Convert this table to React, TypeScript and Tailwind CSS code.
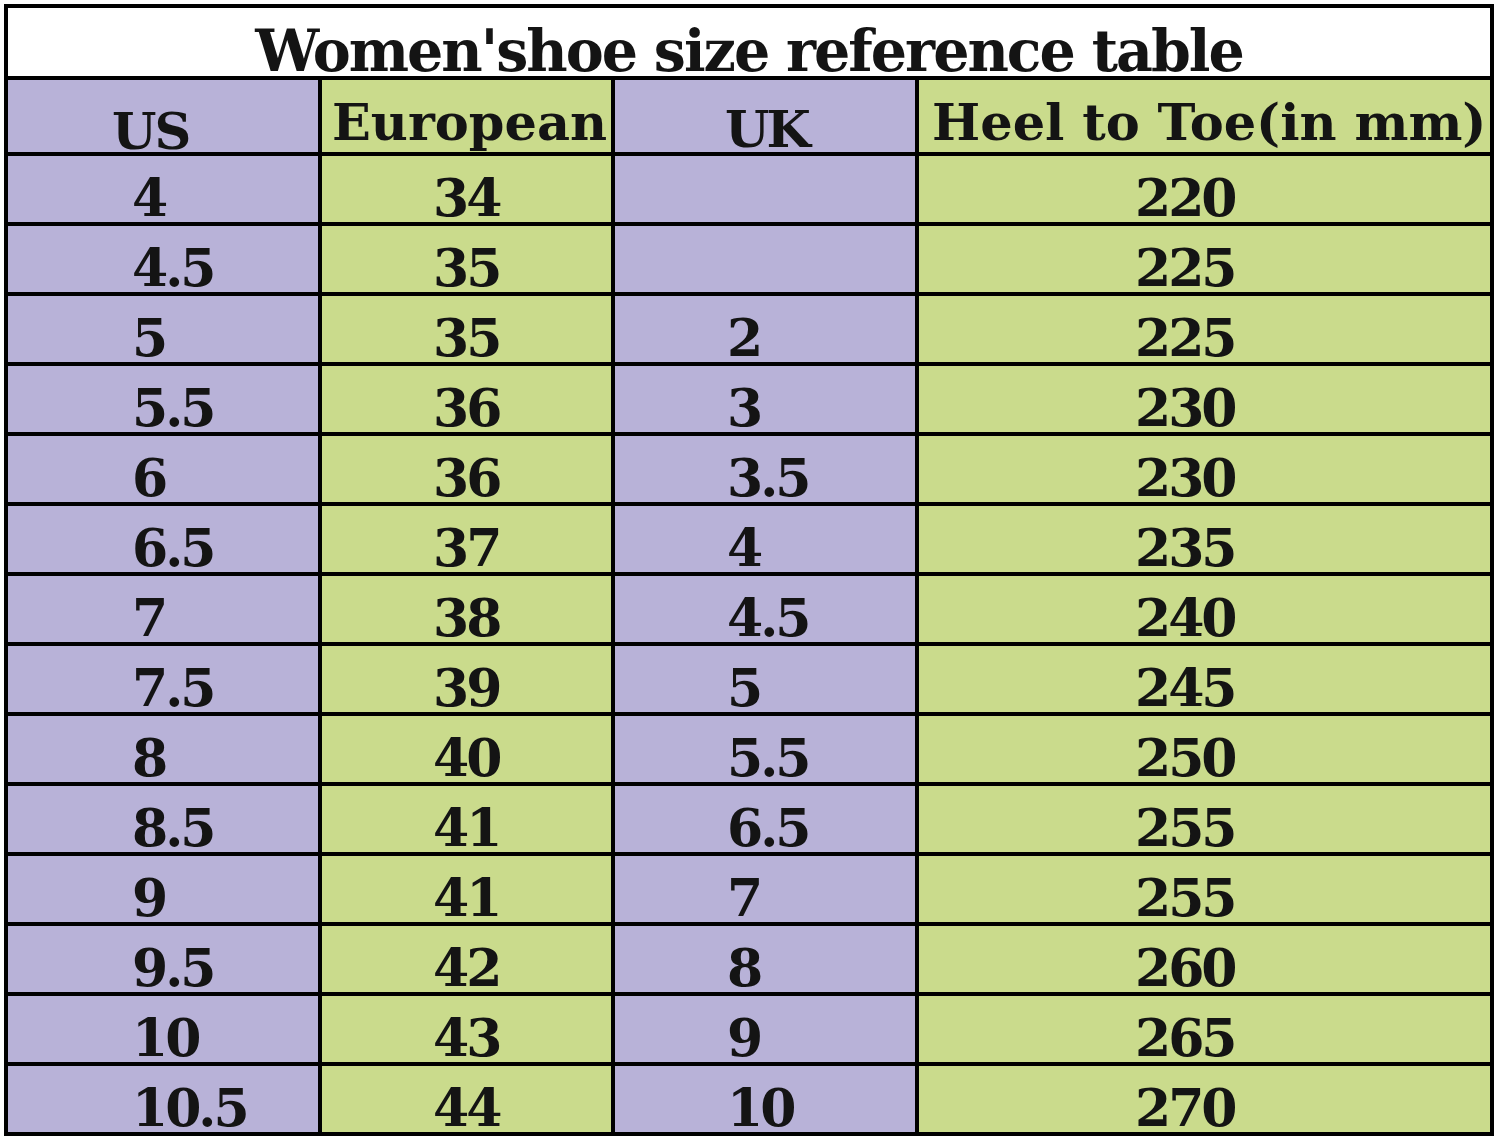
import React from 'react';

const rows: [string, string, string, string][] = [
  ['4', '34', '', '220'],
  ['4.5', '35', '', '225'],
  ['5', '35', '2', '225'],
  ['5.5', '36', '3', '230'],
  ['6', '36', '3.5', '230'],
  ['6.5', '37', '4', '235'],
  ['7', '38', '4.5', '240'],
  ['7.5', '39', '5', '245'],
  ['8', '40', '5.5', '250'],
  ['8.5', '41', '6.5', '255'],
  ['9', '41', '7', '255'],
  ['9.5', '42', '8', '260'],
  ['10', '43', '9', '265'],
  ['10.5', '44', '10', '270'],
];

const serif = "font-['DejaVu_Serif','Liberation_Serif',serif] font-bold text-[#141414] leading-none whitespace-nowrap";

export default function App() {
  return (
    <div className="w-[1500px] h-[1137px] bg-white p-[4px]">
      <div className="w-[1490px] border-[4px] border-black bg-black">
        <div className={`grid grid-cols-[310px_289px_300px_571px] gap-[4px] ${serif}`}>
          <div className="col-span-4 h-[68px] bg-white flex justify-center pt-[14px] text-[57px] tracking-[-2px]">
            Women'shoe size reference table
          </div>

          <div className="h-[72px] bg-[#b8b2d8] pl-[104px] pt-[26px] text-[51px] tracking-[-2px]">US</div>
          <div className="h-[72px] bg-[#cadb8c] pl-[10px] pt-[17px] text-[51px]">European</div>
          <div className="h-[72px] bg-[#b8b2d8] pl-[110px] pt-[24px] text-[51px] tracking-[-3px]">UK</div>
          <div className="h-[72px] bg-[#cadb8c] pl-[13px] pt-[17px] text-[51px]">Heel to Toe(in mm)</div>

          {rows.map((r, i) => (
            <React.Fragment key={i}>
              <div className="h-[66px] bg-[#b8b2d8] pl-[124px] pt-[16px] text-[52px] tracking-[-3px]">{r[0]}</div>
              <div className="h-[66px] bg-[#cadb8c] pl-[111px] pt-[16px] text-[52px] tracking-[-3px]">{r[1]}</div>
              <div className="h-[66px] bg-[#b8b2d8] pl-[112px] pt-[16px] text-[52px] tracking-[-3px]">{r[2]}</div>
              <div className="h-[66px] bg-[#cadb8c] pl-[216px] pt-[16px] text-[52px] tracking-[-3px]">{r[3]}</div>
            </React.Fragment>
          ))}
        </div>
      </div>
    </div>
  );
}
